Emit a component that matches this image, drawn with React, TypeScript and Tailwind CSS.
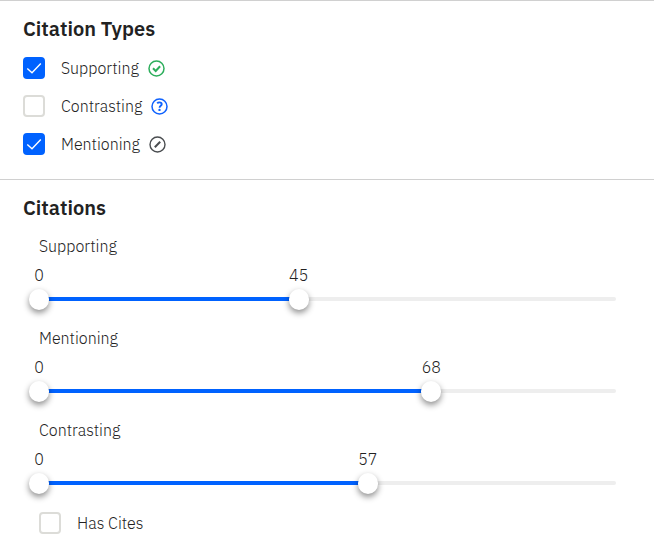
import { useId, useState } from 'react';
import type { ReactNode } from 'react';

function SupportingIcon() {
  return (
    <svg className="size-[17px] shrink-0 text-[#2dae5c]" viewBox="0 0 17 17" fill="none" stroke="currentColor" aria-hidden="true">
      <circle cx="8.5" cy="8.5" r="7.5" strokeWidth="1.5" />
      <path d="M5 8.300l2.700 2.700 4.400-4.700" strokeWidth="2" />
    </svg>
  );
}

function ContrastingIcon() {
  return (
    <svg className="size-[17px] shrink-0 text-[#0f62fe]" viewBox="0 0 17 17" fill="none" stroke="currentColor" aria-hidden="true">
      <circle cx="8.5" cy="8.5" r="7.5" strokeWidth="1.5" />
      <path d="M6.200 5.300c.5-.6 1.200-.9 2.200-.9 1.400 0 2.300.7 2.300 1.800 0 1.600-2.100 1.500-2.100 3.500" strokeWidth="1.900" />
      <circle cx="8.500" cy="11.900" r="1.200" fill="currentColor" stroke="none" />
    </svg>
  );
}

function MentioningIcon() {
  return (
    <svg className="size-[17px] shrink-0 text-[#4a4d50]" viewBox="0 0 17 17" fill="none" stroke="currentColor" aria-hidden="true">
      <circle cx="8.5" cy="8.5" r="7.5" strokeWidth="1.4" />
      <path d="M5.800 11.200l5.400-5.400" strokeWidth="2" />
    </svg>
  );
}

type CheckProps = { label: string; icon?: ReactNode; initial?: boolean };

function CheckRow({ label, icon, initial = false }: CheckProps) {
  const [checked, setChecked] = useState(initial);
  return (
    <label className="flex h-[22px] items-center">
      <span className="grid size-[22px] shrink-0">
        <input
          type="checkbox"
          checked={checked}
          onChange={(e) => setChecked(e.target.checked)}
          className="peer col-start-1 row-start-1 size-[22px] appearance-none rounded border-2 border-[#dcdcd8] bg-white checked:border-[#0062ff] checked:bg-[#0062ff]"
        />
        <svg
          className="pointer-events-none invisible col-start-1 row-start-1 size-[22px] text-white peer-checked:visible"
          viewBox="0 0 22 22"
          fill="none"
          stroke="currentColor"
          strokeWidth="1.4"
          aria-hidden="true"
        >
          <path d="M4.300 11.500l4.700 4.300 8.800-9.200" />
        </svg>
      </span>
      <span className="mr-[9px] ml-4">{label}</span>
      {icon}
    </label>
  );
}

const thumb =
  'pointer-events-none absolute top-[-8px] -left-[10px] m-0 h-[21px] w-[calc(100%+20px)] appearance-none bg-transparent ' +
  '[&::-webkit-slider-thumb]:pointer-events-auto [&::-webkit-slider-thumb]:h-[21px] [&::-webkit-slider-thumb]:w-5 [&::-webkit-slider-thumb]:appearance-none ' +
  '[&::-webkit-slider-thumb]:rounded-full [&::-webkit-slider-thumb]:bg-white [&::-webkit-slider-thumb]:shadow-[0_3px_6px_rgba(0,0,0,0.45)]';

function RangeSlider({ label, initial }: { label: string; initial: number }) {
  const id = useId();
  const [low, setLow] = useState(0);
  const [high, setHigh] = useState(initial);
  return (
    <div role="group" aria-labelledby={id} className="pb-[25px]">
      <div id={id}>{label}</div>
      <div className="relative mt-[5px] h-6">
        <output className="absolute -translate-x-1/2" style={{ left: `${low}%` }}>{low}</output>
        <output className="absolute -translate-x-1/2" style={{ left: `${high}%` }}>{high}</output>
      </div>
      <div className="relative mt-[10px] h-1 rounded-sm bg-[#eeeeee]">
        <div className="absolute inset-y-0 bg-[#0062ff]" style={{ left: `${low}%`, width: `${high - low}%` }} />
        <input
          type="range"
          aria-label={`${label} minimum`}
          min={0}
          max={100}
          value={low}
          onChange={(e) => setLow(Math.min(Number(e.target.value), high))}
          className={thumb}
        />
        <input
          type="range"
          aria-label={`${label} maximum`}
          min={0}
          max={100}
          value={high}
          onChange={(e) => setHigh(Math.max(Number(e.target.value), low))}
          className={thumb}
        />
      </div>
    </div>
  );
}

export default function App() {
  return (
    <main className="bg-white font-['IBM_Plex_Sans',Inter,sans-serif] text-base leading-6 font-light text-[#222222]">
      <section className="border-t border-[#d0d0d0] px-[23px] pt-[14px] pb-6">
        <h2 className="text-xl leading-7 font-semibold">Citation Types</h2>
        <div className="mt-[14px] flex flex-col items-start gap-4">
          <CheckRow label="Supporting" icon={<SupportingIcon />} initial />
          <CheckRow label="Contrasting" icon={<ContrastingIcon />} />
          <CheckRow label="Mentioning" icon={<MentioningIcon />} initial />
        </div>
      </section>
      <section className="border-t border-[#d0d0d0] px-[23px] pt-[14px]">
        <h2 className="text-xl leading-7 font-semibold">Citations</h2>
        <div className="mt-3 pr-[15px] pl-4">
          <RangeSlider label="Supporting" initial={45} />
          <RangeSlider label="Mentioning" initial={68} />
          <RangeSlider label="Contrasting" initial={57} />
          <div className="flex pt-[2px]">
            <CheckRow label="Has Cites" />
          </div>
        </div>
      </section>
    </main>
  );
}
